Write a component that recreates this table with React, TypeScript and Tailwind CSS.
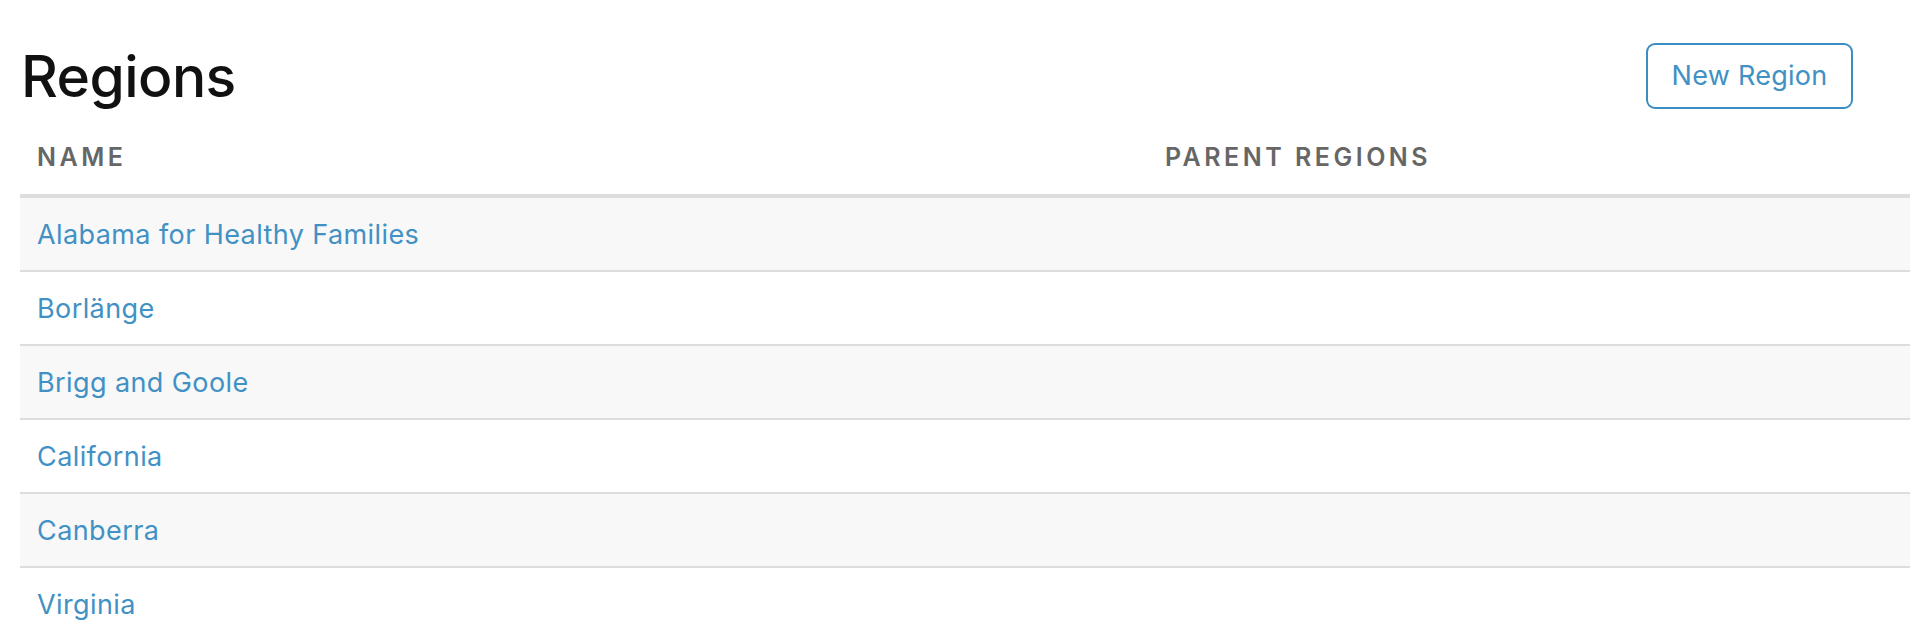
const regions = [
  { id: 1, name: "Alabama for Healthy Families", parents: "" },
  { id: 2, name: "Borlänge", parents: "" },
  { id: 3, name: "Brigg and Goole", parents: "" },
  { id: 4, name: "California", parents: "" },
  { id: 5, name: "Canberra", parents: "" },
  { id: 6, name: "Virginia", parents: "" },
];

const App = () => {
  return (
    <div className="min-h-screen bg-white pl-[20px] pr-[10px] font-['Inter',sans-serif]">
      <div className="flex items-center justify-between pt-[43px] pr-[57px]">
        <h1 className="pl-[1px] text-[57px] leading-none font-medium tracking-[-0.01em] text-[#111]">
          Regions
        </h1>
        <button className="h-[66px] w-[207px] rounded-[9px] border-2 border-[#3b8ec2] text-[27px] tracking-[0.01em] text-[#4191c4]">
          New Region
        </button>
      </div>

      <div className="grid grid-cols-[1128px_1fr] border-b-4 border-[#ddd] h-[89px] pt-[13px] items-center text-[25px] font-semibold uppercase tracking-[0.14em] text-[#666]">
        <div className="pl-[17px]">Name</div>
        <div className="pl-[17px]">Parent Regions</div>
      </div>

      <div>
        {regions.map((region, i) => (
          <div
            key={region.id}
            className={
              "grid grid-cols-[1128px_1fr] h-[74px] pt-[3px] items-center border-b-2 border-[#ddd] text-[27px] tracking-[0.015em] " +
              (i % 2 === 0 ? "bg-[#f8f8f8]" : "bg-white")
            }
          >
            <a href="#" className="pl-[17px] text-[#4191c4]">
              {region.name}
            </a>
            <div className="pl-[17px] text-[#444]">{region.parents}</div>
          </div>
        ))}
      </div>
    </div>
  );
};

export default App;
